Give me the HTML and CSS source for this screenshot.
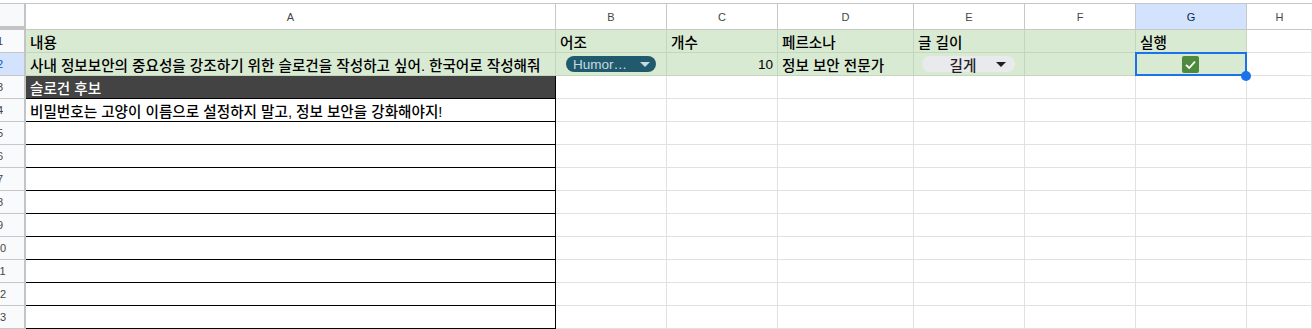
FILE: index.html
```html
<!DOCTYPE html>
<html lang="ko">
<head>
<meta charset="utf-8">
<link rel="stylesheet" href="styles.css">
</head>
<body>
<div class="sheet">
  <div class="corner"></div>
  <div class="ch">A</div>
  <div class="ch">B</div>
  <div class="ch">C</div>
  <div class="ch">D</div>
  <div class="ch">E</div>
  <div class="ch">F</div>
  <div class="ch sel">G</div>
  <div class="ch last">H</div>

  <div class="rh"><span>1</span></div>
  <div class="c g">내용</div>
  <div class="c g">어조</div>
  <div class="c g">개수</div>
  <div class="c g">페르소나</div>
  <div class="c g">글 길이</div>
  <div class="c g"></div>
  <div class="c g">실행</div>
  <div class="c"></div>

  <div class="rh rsel"><span>2</span></div>
  <div class="c g">사내 정보보안의 중요성을 강조하기 위한 슬로건을 작성하고 싶어. 한국어로 작성해줘</div>
  <div class="c g"><div class="chip dark"><span class="ct">Humor…</span><span class="tri"></span></div></div>
  <div class="c g right">10</div>
  <div class="c g">정보 보안 전문가</div>
  <div class="c g"><div class="chip light"><span class="ct">길게</span><span class="tri"></span></div></div>
  <div class="c g"></div>
  <div class="c g center active">
    <svg class="cb" width="17" height="17" viewBox="0 0 17 17"><rect x="0" y="0" width="17" height="17" rx="2" fill="#4e8a3e"/><polyline points="4,8.8 7.2,12 13,5.6" fill="none" stroke="#fff" stroke-width="1.8"/></svg>
    <div class="selbox"></div>
    <div class="handle"></div>
  </div>
  <div class="c"></div>

  <div class="rh"><span>3</span></div>
  <div class="c dk">슬로건 후보</div>
  <div class="c"></div><div class="c"></div><div class="c"></div><div class="c"></div><div class="c"></div><div class="c"></div><div class="c"></div>

  <div class="rh"><span>4</span></div>
  <div class="c bk">비밀번호는 고양이 이름으로 설정하지 말고, 정보 보안을 강화해야지!</div>
  <div class="c"></div><div class="c"></div><div class="c"></div><div class="c"></div><div class="c"></div><div class="c"></div><div class="c"></div>

  <div class="rh"><span>5</span></div>
  <div class="c bk"></div>
  <div class="c"></div><div class="c"></div><div class="c"></div><div class="c"></div><div class="c"></div><div class="c"></div><div class="c"></div>

  <div class="rh"><span>6</span></div>
  <div class="c bk"></div>
  <div class="c"></div><div class="c"></div><div class="c"></div><div class="c"></div><div class="c"></div><div class="c"></div><div class="c"></div>

  <div class="rh"><span>7</span></div>
  <div class="c bk"></div>
  <div class="c"></div><div class="c"></div><div class="c"></div><div class="c"></div><div class="c"></div><div class="c"></div><div class="c"></div>

  <div class="rh"><span>8</span></div>
  <div class="c bk"></div>
  <div class="c"></div><div class="c"></div><div class="c"></div><div class="c"></div><div class="c"></div><div class="c"></div><div class="c"></div>

  <div class="rh"><span>9</span></div>
  <div class="c bk"></div>
  <div class="c"></div><div class="c"></div><div class="c"></div><div class="c"></div><div class="c"></div><div class="c"></div><div class="c"></div>

  <div class="rh"><span>10</span></div>
  <div class="c bk"></div>
  <div class="c"></div><div class="c"></div><div class="c"></div><div class="c"></div><div class="c"></div><div class="c"></div><div class="c"></div>

  <div class="rh"><span>11</span></div>
  <div class="c bk"></div>
  <div class="c"></div><div class="c"></div><div class="c"></div><div class="c"></div><div class="c"></div><div class="c"></div><div class="c"></div>

  <div class="rh"><span>12</span></div>
  <div class="c bk"></div>
  <div class="c"></div><div class="c"></div><div class="c"></div><div class="c"></div><div class="c"></div><div class="c"></div><div class="c"></div>

  <div class="rh"><span>13</span></div>
  <div class="c bk"></div>
  <div class="c"></div><div class="c"></div><div class="c"></div><div class="c"></div><div class="c"></div><div class="c"></div><div class="c"></div>
</div>
</body>
</html>
```

FILE: styles.css
```css
* { box-sizing: border-box; }
html, body { margin: 0; padding: 0; background: #fff; overflow: hidden; }
body { width: 1312px; height: 329px; }

.sheet {
  margin-top: 3px;
  display: grid;
  grid-template-columns: 26px 530px 111px 111px 136px 111px 111px 111px 1fr;
  grid-template-rows: 27px repeat(13, 23px);
  font-family: "Liberation Sans", "Noto Sans CJK KR", sans-serif;
}

.corner {
  background: #f8f9fa;
  border-top: 1px solid #c7c7c7;
  border-right: 2px solid #c4c4c4;
  border-bottom: 4px solid #c4c4c4;
}

.ch {
  background: #fff;
  border-top: 1px solid #c7c7c7;
  border-bottom: 1px solid #c7c7c7;
  border-right: 1px solid #c7c7c7;
  color: #444746;
  font-size: 11px;
  display: flex;
  align-items: center;
  justify-content: center;
  padding-top: 1px;
}
.ch.sel { background: #d3e3fd; color: #041e49; }
.ch.last { border-right: none; }

.rh {
  background: #f9fafb;
  border-right: 2px solid #c4c4c4;
  border-bottom: 1px solid #c7c7c7;
  overflow: hidden;
  color: #444746;
  font-size: 11px;
  display: flex;
  align-items: center;
}
.rh span {
  flex: 0 0 50px;
  margin-left: -25px;
  text-align: center;
}
.rh.rsel { background: #d3e3fd; color: #0b57d0; }

.c {
  position: relative;
  border-right: 1px solid #e1e1e1;
  border-bottom: 1px solid #e1e1e1;
  font-size: 14.6px;
  font-weight: 500;
  color: #000;
  padding: 0 3px 0 4px;
  display: flex;
  align-items: center;
  white-space: nowrap;
  overflow: visible;
}
.c.g { background: #d9ead3; border-color: #c4d6bd; }
.c.right { justify-content: flex-end; padding-right: 4px; font-size: 13.5px; font-weight: 400; }
.c.center { justify-content: center; }
.c.dk { background: #434343; color: #fff; border-right: 1px solid #000; border-bottom: 1px solid #000; }
.c.bk { border-right: 1px solid #000; border-bottom: 1px solid #000; }

.chip {
  height: 16px;
  border-radius: 8px;
  display: flex;
  align-items: center;
}
.chip.dark {
  margin-left: 6px;
  width: 90px;
  background: #215a6c;
  color: #c6dbe1;
  padding: 0 6px 0 7px;
  font-size: 13.5px;
  font-weight: 400;
}
.chip.dark .ct { flex: 1; }
.chip.dark .tri { border-top-color: #c6dbe1; }
.chip.light {
  margin-left: 4px;
  width: 93px;
  background: #e8eaed;
  color: #1f1f1f;
  padding: 0 9px 0 8px;
  font-size: 14.6px;
}
.chip.light .ct { flex: 1; text-align: center; }
.chip.light .tri { border-top-color: #1f1f1f; }
.tri {
  width: 0; height: 0;
  border-left: 5px solid transparent;
  border-right: 5px solid transparent;
  border-top: 5px solid #000;
}

.cb { display: block; }
.c.active { padding-right: 6px; }
.selbox {
  position: absolute;
  left: -1px; top: -1px;
  width: 112px; height: 24px;
  border: 2px solid #1a73e8;
  pointer-events: none;
}
.handle {
  position: absolute;
  left: 105px; top: 18px;
  width: 10px; height: 10px;
  border-radius: 50%;
  background: #1a73e8;
  z-index: 2;
}
```
